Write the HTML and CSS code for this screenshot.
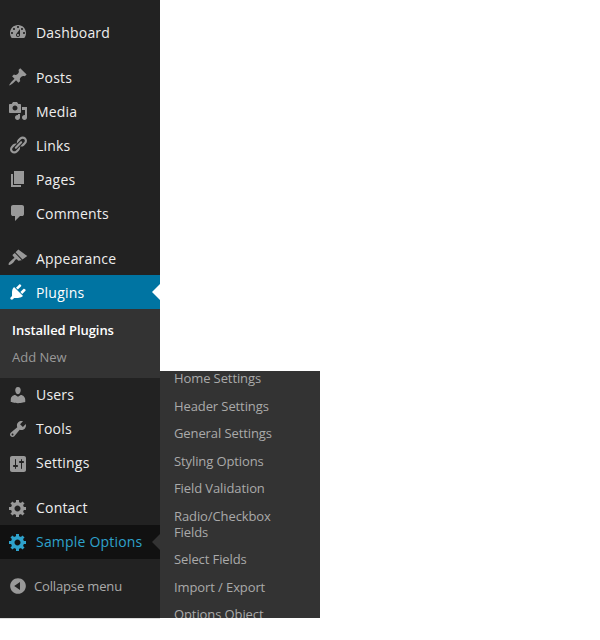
FILE: index.html
```html
<!DOCTYPE html>
<html lang="en">
<head>
<meta charset="utf-8">
<title>Plugins</title>
<link rel="stylesheet" href="styles.css">
</head>
<body>
<div class="admin">
  <nav class="sidebar">
    <ul class="menu">
      <li class="item"><svg class="icon" viewBox="0 0 20 20"><path d="M3.76 16h12.48c1.1-1.37 1.76-3.11 1.76-5 0-4.42-3.58-8-8-8s-8 3.58-8 8c0 1.89.66 3.63 1.76 5zM10 4c.55 0 1 .45 1 1s-.45 1-1 1-1-.45-1-1 .45-1 1-1zM6 6c.55 0 1 .45 1 1s-.45 1-1 1-1-.45-1-1 .45-1 1-1zm8 0c.55 0 1 .45 1 1s-.45 1-1 1-1-.45-1-1 .45-1 1-1zm-5.37 5.55L12 7v6c0 1.1-.9 2-2 2s-2-.9-2-2c0-.57.24-1.08.63-1.45zM4 10c.55 0 1 .45 1 1s-.45 1-1 1-1-.45-1-1 .45-1 1-1zm12 0c.55 0 1 .45 1 1s-.45 1-1 1-1-.45-1-1 .45-1 1-1zm-5 3c0-.55-.45-1-1-1s-1 .45-1 1 .45 1 1 1 1-.45 1-1z"/></svg><span>Dashboard</span></li>
    </ul>
    <ul class="menu group">
      <li class="item"><svg class="icon" viewBox="0 0 20 20"><path d="M10.44 3.02l1.82-1.82 6.36 6.35-1.83 1.82c-1.05-.68-2.48-.57-3.41.36l-.75.75c-.92.93-1.04 2.35-.35 3.41l-1.83 1.82-2.41-2.41-2.8 2.79c-.42.42-3.38 2.71-3.8 2.29s1.86-3.39 2.28-3.81l2.79-2.79L4.1 9.36l1.83-1.82c1.05.69 2.48.57 3.4-.36l.75-.75c.93-.92 1.05-2.35.36-3.41z"/></svg><span>Posts</span></li>
      <li class="item"><svg class="icon" viewBox="0 0 20 20"><path d="M13 11V4c0-.55-.45-1-1-1h-1.67L9 1H5L3.67 3H2c-.55 0-1 .45-1 1v7c0 .55.45 1 1 1h10c.55 0 1-.45 1-1zM7 4.5c1.38 0 2.5 1.12 2.5 2.5S8.38 9.5 7 9.5 4.5 8.38 4.5 7 5.62 4.5 7 4.5zM14 6h5v10.5c0 1.38-1.12 2.5-2.5 2.5S14 17.88 14 16.5s1.12-2.5 2.5-2.5c.17 0 .34.02.5.05V9h-3V6zm-4 8.05V13h2v3.5c0 1.38-1.12 2.5-2.5 2.5S7 17.88 7 16.5 8.12 14 9.5 14c.17 0 .34.02.5.05z"/></svg><span>Media</span></li>
      <li class="item"><svg class="icon" viewBox="0 0 20 20"><path d="M17.74 2.76c1.68 1.69 1.68 4.41 0 6.1l-1.53 1.52c-1.12 1.12-2.7 1.47-4.14 1.09l2.62-2.61.76-.77.76-.76c.84-.84.84-2.2 0-3.04-.84-.85-2.2-.85-3.04 0l-.77.76-3.38 3.38c-.37-1.44-.02-3.02 1.1-4.14l1.52-1.53c1.69-1.68 4.42-1.68 6.1 0zM8.59 13.43l5.34-5.34c.42-.42.42-1.1 0-1.52-.44-.43-1.13-.39-1.53 0l-5.33 5.34c-.42.42-.42 1.1 0 1.52.44.43 1.13.39 1.52 0zm-.76 2.29l4.14-4.15c.38 1.44.03 3.02-1.09 4.14l-1.52 1.53c-1.69 1.68-4.41 1.68-6.1 0-1.68-1.68-1.68-4.42 0-6.1l1.53-1.52c1.12-1.12 2.7-1.47 4.14-1.1l-4.14 4.15c-.85.84-.85 2.2 0 3.05.84.84 2.2.84 3.04 0z"/></svg><span>Links</span></li>
      <li class="item"><svg class="icon" viewBox="0 0 20 20"><path d="M6 15V2h10v13H6zm-1 1h8v2H3V5h2v11z"/></svg><span>Pages</span></li>
      <li class="item"><svg class="icon" viewBox="0 0 20 20"><path d="M5 2h9q.82 0 1.41.59T16 4v7q0 .82-.59 1.41T14 13h-2l-5 5v-5H5q-.82 0-1.41-.59T3 11V4q0-.82.59-1.41T5 2z"/></svg><span>Comments</span></li>
    </ul>
    <ul class="menu group">
      <li class="item"><svg class="icon" viewBox="0 0 20 20"><path d="M14.5 11.5L7.5 4.2l2.800-2.600 9 6.500zM13.800 12.200L6.800 4.900 4.930 6.470c-.39.39-.39 1.020 0 1.410l1.060 1.060c.39.39.39 1.030 0 1.420-.6.6-1.430 1.110-2.210 1.690-.35.26-.7.53-1.010.84C1.430 13.710 0 16.060.72 16.780c.72.72 3.070-.71 4.410-2.050.31-.31.58-.66.84-1.010.58-.78 1.090-1.610 1.690-2.210.39-.39 1.030-.39 1.420 0l1.060 1.060c.39.39 1.020.39 1.410 0z"/></svg><span>Appearance</span></li>
      <li class="item current"><svg class="icon" viewBox="0 0 20 20"><path d="M13.11 4.36L9.87 7.6 8 5.73l3.24-3.24c.35-.34 1.05-.2 1.56.32.52.51.66 1.21.31 1.55zm-8 1.77l.91-1.12 9.01 9.01-1.19.84c-.71.71-2.63 1.16-3.82 1.16H6.14L4.9 17.26c-.59.59-1.54.59-2.12 0-.59-.58-.59-1.53 0-2.12l1.24-1.24v-3.88c0-1.13.4-3.19 1.09-3.89zm7.26 3.97l3.24-3.24c.34-.35 1.04-.21 1.55.31.52.51.66 1.21.31 1.55l-3.24 3.25z"/></svg><span>Plugins</span></li>
      <li>
        <ul class="submenu">
          <li class="sub-item sub-current">Installed Plugins</li>
          <li class="sub-item">Add New</li>
        </ul>
      </li>
      <li class="item"><svg class="icon" viewBox="0 0 20 20"><path d="M10 9.25c-2.27 0-2.73-3.44-2.73-3.44C7 4.02 7.82 2 9.97 2c2.16 0 2.98 2.02 2.71 3.81 0 0-.41 3.44-2.68 3.44zm0 2.57L12.72 10c2.39 0 4.52 2.33 4.52 4.53v2.49s-3.65 1.13-7.24 1.13c-3.65 0-7.24-1.13-7.24-1.13v-2.49c0-2.25 1.94-4.48 4.47-4.48z"/></svg><span class="lift">Users</span></li>
      <li class="item"><svg class="icon" viewBox="0 0 20 20"><path d="M16.68 9.77c-1.34 1.34-3.3 1.67-4.95.99l-5.41 6.52c-.99.99-2.59.99-3.58 0s-.99-2.59 0-3.57l6.52-5.42c-.68-1.65-.35-3.61.99-4.95 1.28-1.28 3.12-1.62 4.72-1.06l-2.89 2.89 2.82 2.82 2.86-2.87c.53 1.58.18 3.39-1.08 4.65zM3.81 16.21c.4.39 1.04.39 1.43 0 .4-.4.4-1.04 0-1.43-.39-.4-1.03-.4-1.43 0-.39.39-.39 1.03 0 1.43z"/></svg><span class="lift">Tools</span></li>
      <li class="item"><svg class="icon icon-low" viewBox="0 0 20 20"><path d="M18 16V4c0-1.1-.9-2-2-2H4c-1.1 0-2 .9-2 2v12c0 1.1.9 2 2 2h12c1.1 0 2-.9 2-2zM8 11h1c.55 0 1 .45 1 1s-.45 1-1 1H8v1.5c0 .28-.22.5-.5.5s-.5-.22-.5-.5V13H6c-.55 0-1-.45-1-1s.45-1 1-1h1V5.5c0-.28.22-.5.5-.5s.5.22.5.5V11zm5-2h-1c-.55 0-1-.45-1-1s.45-1 1-1h1V5.5c0-.28.22-.5.5-.5s.5.22.5.5V7h1c.55 0 1 .45 1 1s-.45 1-1 1h-1v5.5c0 .28-.22.5-.5.5s-.5-.22-.5-.5V9z"/></svg><span class="lift">Settings</span></li>
    </ul>
    <ul class="menu group">
      <li class="item"><svg class="icon" viewBox="0 0 20 20"><path d="M18 12h-2.18c-.17.7-.44 1.35-.81 1.93l1.54 1.54-2.1 2.1-1.54-1.54c-.58.36-1.23.63-1.91.79V19H8v-2.18c-.68-.16-1.33-.43-1.91-.79l-1.54 1.54-2.12-2.12 1.54-1.54c-.36-.58-.63-1.23-.79-1.91H1V9.030h2.17c.16-.7.44-1.35.8-1.94L2.43 5.550l2.1-2.1 1.54 1.54c.58-.37 1.24-.64 1.93-.81V2h3v2.18c.68.16 1.33.43 1.91.79l1.54-1.54 2.12 2.12-1.54 1.54c.36.59.64 1.24.8 1.94H18V12zm-8.500 1.500c1.66 0 3-1.34 3-3s-1.34-3-3-3-3 1.34-3 3 1.34 3 3 3z"/></svg><span class="lift">Contact</span></li>
      <li class="item open"><svg class="icon" viewBox="0 0 20 20"><path d="M18 12h-2.18c-.17.7-.44 1.35-.81 1.93l1.54 1.54-2.1 2.1-1.54-1.54c-.58.36-1.23.63-1.91.79V19H8v-2.18c-.68-.16-1.33-.43-1.91-.79l-1.54 1.54-2.12-2.12 1.54-1.54c-.36-.58-.63-1.23-.79-1.91H1V9.030h2.17c.16-.7.44-1.35.8-1.94L2.43 5.550l2.1-2.1 1.54 1.54c.58-.37 1.24-.64 1.93-.81V2h3v2.18c.68.16 1.33.43 1.91.79l1.54-1.54 2.12 2.12-1.54 1.54c.36.59.64 1.24.8 1.94H18V12zm-8.500 1.500c1.66 0 3-1.34 3-3s-1.34-3-3-3-3 1.34-3 3 1.34 3 3 3z"/></svg><span class="lift">Sample Options</span></li>
    </ul>
    <div class="collapse"><svg class="icon" viewBox="0 0 20 20"><path d="M10 2.160c4.330 0 7.840 3.510 7.840 7.840s-3.510 7.840-7.840 7.840S2.160 14.330 2.160 10 5.710 2.160 10 2.160zm2 11.720V6.120L6.180 9.970z"/></svg><span>Collapse menu</span></div>
  </nav>
  <ul class="flyout">
    <li class="fly-item">Home Settings</li>
    <li class="fly-item">Header Settings</li>
    <li class="fly-item">General Settings</li>
    <li class="fly-item">Styling Options</li>
    <li class="fly-item">Field Validation</li>
    <li class="fly-item">Radio/Checkbox Fields</li>
    <li class="fly-item">Select Fields</li>
    <li class="fly-item">Import / Export</li>
    <li class="fly-item">Options Object</li>
  </ul>
</div>
</body>
</html>
```

FILE: styles.css
```css
* { box-sizing: border-box; }
html, body { margin: 0; padding: 0; background: #fff; }
body { font-family: "Open Sans", sans-serif; }
ul { list-style: none; margin: 0; padding: 0; }

.admin { position: relative; width: 600px; height: 640px; }

.sidebar {
  width: 160px;
  height: 618px;
  padding-top: 15px;
  background: #222;
  box-shadow: 0 1px 0 #ddd;
}
.group { margin-top: 11px; }

.item {
  position: relative;
  display: flex;
  align-items: center;
  height: 34px;
  padding-left: 8px;
  font-size: 14px;
  letter-spacing: 0.2px;
  color: #eee;
}
.icon {
  flex: none;
  width: 20px;
  height: 20px;
  margin-right: 8px;
  fill: #999;
}
.icon-low { margin-top: 2px; }
.lift { margin-bottom: 2px; }
.current { background: #0074a2; color: #fff; }
.current .icon { fill: #fff; }
.current::after,
.open::after {
  content: "";
  position: absolute;
  right: 0;
  top: 50%;
  margin-top: -8px;
  border: 8px solid transparent;
  border-left-width: 0;
  border-right-color: #fff;
}
.open { background: #111; color: #2ea2cc; }
.open .icon { fill: #2ea2cc; }
.open::after { border-right-color: #333; }

.submenu { background: #333; height: 69px; padding-top: 8px; }
.sub-item {
  height: 27px;
  padding-left: 12px;
  font-size: 13px;
  line-height: 27px;
  color: #999;
}
.sub-current { color: #fff; font-weight: 600; letter-spacing: -0.05px; }

.collapse {
  display: flex;
  align-items: center;
  height: 34px;
  margin-top: 10px;
  padding-left: 8px;
  font-size: 13px;
  letter-spacing: -0.15px;
  color: #aaa;
}
.collapse .icon { margin-right: 6px; }

.flyout {
  position: absolute;
  left: 160px;
  top: 371px;
  width: 160px;
  height: 247px;
  overflow: hidden;
  background: #333;
}
.fly-item {
  position: relative;
  top: -6px;
  padding: 6px 14px;
  font-size: 13px;
  line-height: 15.6px;
  letter-spacing: -0.1px;
  color: #aaa;
}
```
